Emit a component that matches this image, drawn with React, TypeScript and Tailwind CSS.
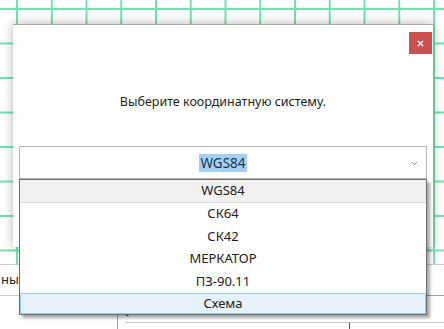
import { ChevronDown, X } from 'lucide-react'

const systems = ['WGS84', 'СК64', 'СК42', 'МЕРКАТОР', 'ПЗ-90.11', 'Схема']

function Background() {
    return (
        <div className="flex flex-col h-full">
            <div className="h-[265px] border-b border-[#c8c8c8] bg-white bg-[linear-gradient(to_right,#70e2b0_2px,transparent_2px),linear-gradient(to_bottom,#70e2b0_2px,transparent_2px)] bg-[length:34.75px_34.5px] bg-[position:16px_8px]" />
            <div className="flex flex-1">
                <div className="w-[117px] flex flex-col">
                    <div className="h-[31px] border-b border-[#c8c8c8] flex items-center pl-[1px] text-[13px] text-[#222]">
                        ны
                    </div>
                </div>
                <div className="flex-1 mt-[30px] border-l border-t border-[#a0a0a0] flex flex-col">
                    <div className="h-[26px] flex text-[12px] text-[#444]">
                        <div className="w-[232px] pl-[8px] pt-[4px]">у</div>
                        <div className="flex-1 pl-[8px] pt-[4px]">Услов</div>
                    </div>
                    <div className="ml-[7px] flex-1 border-t border-[#c8c8c8] flex">
                        <div className="w-[225px] border-r border-[#555]" />
                    </div>
                </div>
            </div>
        </div>
    )
}

export default function App() {
    return (
        <div className="relative w-[444px] h-[329px] overflow-hidden bg-white font-['Noto_Sans',sans-serif]">
            <Background />

            <div className="absolute left-[13px] top-[24px] w-[420px] h-[223px] bg-white border-t border-[#a8a8a8] shadow-[0_0_10px_rgba(0,0,0,0.3)] flex flex-col">
                <div className="h-[30px] pt-[7px] pr-[1px] flex justify-end">
                    <button className="w-[23px] h-[22px] bg-[#c9504f] flex items-center justify-center">
                        <X className="w-[9px] h-[9px] text-white" strokeWidth={3.5} />
                    </button>
                </div>

                <p className="mt-[38px] h-[18px] leading-[18px] text-center text-[12.5px] text-[#1e1e1e]">
                    Выберите координатную систему.
                </p>

                <div className="relative mt-[35px] mx-[6px]">
                    <div className="h-[33px] border border-[#b4b4b4] bg-white flex items-center justify-center relative">
                        <span className="bg-[#a6d0f3] text-[#1c3552] text-[13.5px] leading-[18px] px-[1px]">WGS84</span>
                        <ChevronDown className="absolute right-[7px] top-[12px] w-[9px] h-[9px] text-[#555]" strokeWidth={2} />
                    </div>

                    <ul className="absolute left-0 right-0 top-full h-[136px] bg-white border border-[#6e6e6e] shadow-[3px_3px_3px_rgba(0,0,0,0.35)] text-[13px] text-[#222]">
                        {systems.map((name, i) => (
                            <li
                                key={name}
                                className={
                                    i === 0
                                        ? 'h-[22.5px] bg-[#f1f1f1] border-b border-[#dcdcdc] flex items-center justify-center'
                                        : i === systems.length - 1
                                          ? 'h-[21.5px] bg-[#e5f1fb] border border-[#9ccdf0] flex items-center justify-center'
                                          : 'h-[22.5px] flex items-center justify-center'
                                }
                            >
                                {name}
                            </li>
                        ))}
                    </ul>
                </div>
            </div>
        </div>
    )
}
